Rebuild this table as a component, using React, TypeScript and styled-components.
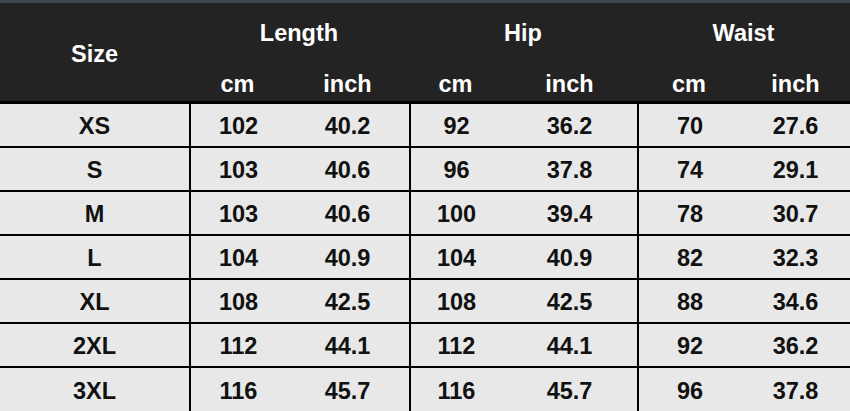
import React from 'react'
import styled, { createGlobalStyle } from 'styled-components'

const GlobalStyle = createGlobalStyle`
  html, body {
    margin: 0;
    padding: 0;
    background: #e8e8e8;
  }
  body {
    font-family: 'Liberation Sans', Arial, sans-serif;
  }
`

// column widths tuned so the cm / inch values sit where they do in the chart
const COLUMNS = '189px 97px 123px 93px 135px 104px 109px'

const Chart = styled.div`
  width: 850px;
  height: 411px;
  overflow: hidden;
  background: #e8e8e8;
  border-top: 3px solid #3a4753;
  box-sizing: border-box;
`

const Head = styled.div`
  display: grid;
  grid-template-columns: ${COLUMNS};
  grid-template-rows: 59px 39px;
  background: #232323;
  border-bottom: 3px solid #000;
  color: #fff;
  font-weight: 700;
  font-size: 23.5px;
`

const HeadCell = styled.div<{ $col: string; $row: string; $shift?: number }>`
  grid-column: ${(p) => p.$col};
  grid-row: ${(p) => p.$row};
  display: flex;
  align-items: center;
  justify-content: center;
  padding-top: ${(p) => p.$shift ?? 0}px;
`

const Row = styled.div`
  display: grid;
  grid-template-columns: ${COLUMNS};
  height: 44px;
  border-bottom: 2px solid #000;
  box-sizing: border-box;
  &:last-child {
    border-bottom: none;
  }
`

const Cell = styled.div<{ $divider?: boolean }>`
  display: flex;
  align-items: center;
  justify-content: center;
  box-sizing: border-box;
  border-left: ${(p) => (p.$divider ? '2px solid #000' : 'none')};
  color: #111;
  font-weight: 700;
  font-size: 23.5px;
  padding-top: 3px;
`

const sizes = [
  ['XS', '102', '40.2', '92', '36.2', '70', '27.6'],
  ['S', '103', '40.6', '96', '37.8', '74', '29.1'],
  ['M', '103', '40.6', '100', '39.4', '78', '30.7'],
  ['L', '104', '40.9', '104', '40.9', '82', '32.3'],
  ['XL', '108', '42.5', '108', '42.5', '88', '34.6'],
  ['2XL', '112', '44.1', '112', '44.1', '92', '36.2'],
  ['3XL', '116', '45.7', '116', '45.7', '96', '37.8'],
]

const groups = [
  { name: 'Length', col: '2 / 4' },
  { name: 'Hip', col: '4 / 6' },
  { name: 'Waist', col: '6 / 8' },
]

export default function App() {
  return (
    <>
      <GlobalStyle />
      <Chart>
        <Head>
          <HeadCell $col="1" $row="1 / 3" $shift={5}>
            Size
          </HeadCell>
          {groups.map((g) => (
            <HeadCell key={g.name} $col={g.col} $row="1" $shift={2}>
              {g.name}
            </HeadCell>
          ))}
          {[2, 3, 4, 5, 6, 7].map((c) => (
            <HeadCell key={c} $col={String(c)} $row="2" $shift={5}>
              {c % 2 === 0 ? 'cm' : 'inch'}
            </HeadCell>
          ))}
        </Head>
        {sizes.map((row) => (
          <Row key={row[0]}>
            {row.map((v, i) => (
              <Cell key={i} $divider={i === 1 || i === 3 || i === 5}>
                {v}
              </Cell>
            ))}
          </Row>
        ))}
      </Chart>
    </>
  )
}
